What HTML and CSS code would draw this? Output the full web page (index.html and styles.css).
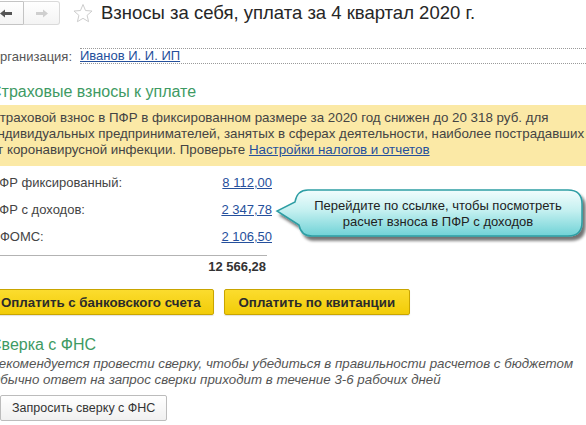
FILE: index.html
```html
<!DOCTYPE html>
<html lang="ru">
<head>
<meta charset="utf-8">
<title>Взносы за себя</title>
<link rel="stylesheet" href="styles.css">
</head>
<body>
<div class="page">
  <header class="topbar">
    <div class="nav">
      <button class="nav-btn back" type="button" aria-label="Назад">
        <svg width="12" height="9" viewBox="0 0 12 9"><path d="M0,4.5 L5,0.5 V3 H12 V6 H5 V8.5 Z" fill="#555"/></svg>
      </button>
      <button class="nav-btn fwd" type="button" aria-label="Вперед">
        <svg width="12" height="9" viewBox="0 0 12 9"><path d="M12,4.5 L7,0.5 V3 H0 V6 H7 V8.5 Z" fill="#cfcfcf"/></svg>
      </button>
    </div>
    <svg class="star" width="20" height="21" viewBox="0 0 20 21"><polygon points="10,1.5 12.53,7.52 19.03,8.06 14.09,12.33 15.58,18.69 10,15.3 4.42,18.69 5.91,12.33 0.97,8.06 7.47,7.52" fill="none" stroke="#cdcdcd" stroke-width="1"/></svg>
    <h1 class="title">Взносы за себя, уплата за 4 квартал 2020 г.</h1>
  </header>

  <div class="org-row">
    <span class="org-label">Организация:</span>
    <div class="org-field"><a class="link" href="#">Иванов И. И. ИП</a></div>
  </div>

  <h2 class="section">Страховые взносы к уплате</h2>
  <div class="note">
    Страховой взнос в ПФР в фиксированном размере за 2020 год снижен до 20 318 руб. для<br>
    индивидуальных предпринимателей, занятых в сферах деятельности, наиболее пострадавших<br>
    от коронавирусной инфекции. Проверьте <a class="link" href="#">Настройки налогов и отчетов</a>
  </div>

  <div class="rows">
    <div class="row"><span>ПФР фиксированный:</span><a class="link" href="#">8 112,00</a></div>
    <div class="row"><span>ПФР с доходов:</span><a class="link" href="#">2 347,78</a></div>
    <div class="row"><span>ФФОМС:</span><a class="link" href="#">2 106,50</a></div>
  </div>
  <div class="total">12 566,28</div>

  <div class="actions">
    <button class="btn btn-yellow first" type="button">Оплатить с банковского счета</button>
    <button class="btn btn-yellow" type="button">Оплатить по квитанции</button>
  </div>

  <h2 class="section section-2">Сверка с ФНС</h2>
  <p class="hint">Рекомендуется провести сверку, чтобы убедиться в правильности расчетов с бюджетом<br>Обычно ответ на запрос сверки приходит в течение 3-6 рабочих дней</p>
  <button class="btn btn-plain" type="button">Запросить сверку с ФНС</button>

  <div class="tooltip">
    <svg class="tooltip-shape" width="316" height="62" viewBox="0 0 316 62">
      <defs>
        <linearGradient id="tg" x1="0" y1="0" x2="0" y2="1">
          <stop offset="0" stop-color="#f2fdfd"/>
          <stop offset="0.45" stop-color="#c4f0f0"/>
          <stop offset="1" stop-color="#6fd2d6"/>
        </linearGradient>
        <filter id="ts" x="-5%" y="-20%" width="115%" height="150%">
          <feGaussianBlur in="SourceAlpha" stdDeviation="1.6"/>
          <feOffset dx="3" dy="4" result="b"/>
          <feComponentTransfer><feFuncA type="linear" slope="0.55"/></feComponentTransfer>
          <feMerge><feMergeNode/><feMergeNode in="SourceGraphic"/></feMerge>
        </filter>
      </defs>
      <path d="M38,5 H298 Q312,5 312,19 V37 Q312,51 298,51 H42 Q31,51 29,40 L7,26 L25,17 Q27,5 38,5 Z" fill="url(#tg)" stroke="#2e9ea4" stroke-width="1.5" filter="url(#ts)"/>
    </svg>
    <div class="tooltip-text">Перейдите по ссылке, чтобы посмотреть<br>расчет взноса в ПФР с доходов</div>
  </div>
</div>
</body>
</html>
```

FILE: styles.css
```css
html, body {
  margin: 0;
  padding: 0;
  background: #ffffff;
}
body {
  width: 586px;
  height: 425px;
  overflow: hidden;
}
.page {
  position: relative;
  margin-left: -10px;
  width: 640px;
  font-family: "Liberation Sans", Arial, sans-serif;
  font-size: 13.33px;
  color: #444;
}

/* top bar */
.topbar {
  display: flex;
  align-items: center;
  height: 26px;
}
.nav {
  display: flex;
  margin-left: -2px;
}
.nav-btn {
  width: 36px;
  height: 24px;
  padding: 0;
  margin: 0;
  display: flex;
  align-items: center;
  justify-content: center;
  background: linear-gradient(#ffffff, #f4f4f4);
  border: 1px solid #c4c4c4;
}
.nav-btn.back {
  border-radius: 3px 0 0 3px;
}
.nav-btn.fwd {
  border-left: none;
  border-radius: 0 3px 3px 0;
  border-color: #dadada;
}
.star {
  margin-left: 13px;
  margin-top: 1px;
}
.title {
  margin: 0 0 0 8px;
  font-size: 18.5px;
  font-weight: normal;
  line-height: 26px;
  color: #262626;
  white-space: nowrap;
}

/* organisation */
.org-row {
  display: flex;
  align-items: center;
  margin-top: 22px;
  height: 16px;
}
.org-label {
  width: 90px;
  flex: none;
  color: #555;
  font-size: 13px;
}
.org-field {
  flex: 1;
  height: 14px;
  line-height: 14px;
  font-size: 13px;
  border-top: 1px dotted #9a9a9a;
  border-bottom: 1px dotted #9a9a9a;
}
.link {
  color: #25509c;
  text-decoration: underline;
}

/* sections */
.section {
  margin: 18px 0 3px 0;
  font-size: 16px;
  font-weight: normal;
  line-height: 20px;
  color: #3e9a63;
}
.note {
  margin-left: -6px;
  padding: 5px 6px 8px;
  line-height: 16px;
  background: #fbe9a6;
  white-space: nowrap;
  color: #444;
}

/* amounts */
.rows {
  width: 282px;
  margin-top: 3px;
}
.row {
  display: flex;
  justify-content: space-between;
  align-items: center;
  height: 27px;
  font-size: 13px;
}
.total {
  width: 276px;
  margin-top: 5px;
  padding: 2px 1px 0 0;
  border-top: 1px solid #b3b3b3;
  text-align: right;
  font-weight: bold;
  font-size: 13px;
  line-height: 17px;
  color: #333;
}

/* buttons */
.actions {
  display: flex;
  gap: 10px;
  margin-top: 14px;
}
.btn {
  height: 26px;
  padding: 0 14px;
  font-family: "Liberation Sans", Arial, sans-serif;
  font-size: 13px;
  border-radius: 2px;
  cursor: pointer;
}
.btn-yellow {
  background: linear-gradient(#fbdc2e, #f2cc08);
  border: 1px solid #c9a500;
  color: #2b2b2b;
  font-weight: bold;
  font-size: 13.3px;
  box-shadow: 0 1px 1px rgba(0, 0, 0, 0.12);
}
.btn-yellow.first {
  margin-left: -2px;
  padding: 0 12px 0 12px;
}
.section-2 {
  margin-top: 20px;
  margin-bottom: 0;
}
.hint {
  margin: 1px 0 0 0;
  font-style: italic;
  line-height: 16px;
  color: #555;
  white-space: nowrap;
}
.btn-plain {
  margin-top: 7px;
  margin-left: 10px;
  padding: 0 11px;
  font-size: 12.5px;
  background: linear-gradient(#ffffff, #f0f0f0);
  border: 1px solid #bcbcbc;
  color: #333;
}

/* tooltip callout */
.tooltip {
  position: absolute;
  left: 280px;
  top: 185px;
  width: 316px;
  height: 62px;
}
.tooltip-shape {
  position: absolute;
  left: 0;
  top: 0;
}
.tooltip-text {
  position: absolute;
  left: 24px;
  top: 13px;
  width: 288px;
  text-align: center;
  line-height: 16px;
  font-size: 13px;
  color: #222;
}
```
